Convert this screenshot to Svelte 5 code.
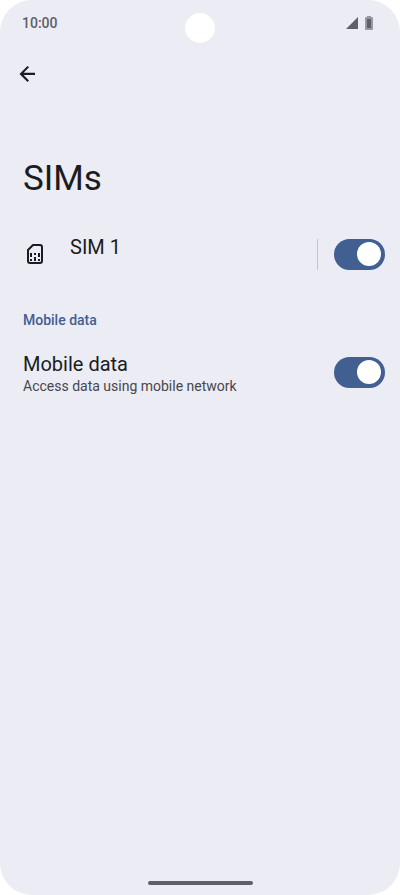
<script>
    let simEnabled = $state(true);
    let mobileData = $state(true);
</script>

<div class="screen">
    <header class="status-bar">
        <span class="time">10:00</span>
        <div class="camera"></div>
        <div class="status-icons">
            <svg width="12" height="12" viewBox="0 0 12 12" aria-hidden="true">
                <path d="M12 0v12H0z" />
            </svg>
            <svg width="8" height="14" viewBox="0 0 8 14" aria-hidden="true">
                <path d="M2 0h4v1h1a1 1 0 0 1 1 1v11a1 1 0 0 1-1 1H1a1 1 0 0 1-1-1V2a1 1 0 0 1 1-1h1z" opacity="0.6" />
                <path d="M2 3h4v9H2z" />
            </svg>
        </div>
    </header>

    <nav class="toolbar">
        <button class="back" aria-label="Back">
            <svg width="24" height="24" viewBox="0 0 24 24" aria-hidden="true">
                <path d="M19 10.700H7.600l5.400-5.400L11.500 3.900l-8 8 8 8 1.500-1.500-5.400-5.400H19z" />
            </svg>
        </button>
    </nav>

    <main>
        <h1>SIMs</h1>

        <div class="row">
            <svg class="sim-icon" width="24" height="24" viewBox="0 0 24 24" aria-hidden="true">
                <path d="M10 3h7a2 2 0 0 1 2 2v14a2 2 0 0 1-2 2H7a2 2 0 0 1-2-2V8z" fill="none" stroke="currentColor" stroke-width="2" stroke-linejoin="round" />
                <path d="M7 11h2v4H7zM11 11h2v2h-2zM15 11h2v4h-2zM7 17h2v2H7zM11 15h2v4h-2zM15 17h2v2h-2z" />
            </svg>
            <label class="title sim-name" for="sim-switch">SIM 1</label>
            <div class="divider"></div>
            <input id="sim-switch" class="switch" type="checkbox" role="switch" bind:checked={simEnabled} />
        </div>

        <h2>Mobile data</h2>

        <div class="row">
            <div class="text">
                <label class="title" for="data-switch">Mobile data</label>
                <p>Access data using mobile network</p>
            </div>
            <input id="data-switch" class="switch" type="checkbox" role="switch" bind:checked={mobileData} />
        </div>
    </main>

    <footer>
        <div class="home-handle"></div>
    </footer>
</div>

<style>
    :global(body) {
        margin: 0;
        background: white;
    }
    .screen {
        position: relative;
        display: flex;
        flex-direction: column;
        box-sizing: border-box;
        min-height: 100vh;
        border-radius: 32px;
        background: #ebecf4;
        color: #1b1c21;
        font-family: Roboto, "Liberation Sans", sans-serif;
    }
    svg {
        display: block;
        flex: none;
        fill: currentColor;
    }
    .status-bar {
        display: flex;
        align-items: center;
        justify-content: space-between;
        height: 46px;
        padding: 0 27px 0 22px;
        color: #5f6067;
    }
    .time {
        font-size: 14px;
        font-weight: 500;
    }
    .camera {
        position: absolute;
        top: 13px;
        left: 50%;
        width: 30px;
        height: 30px;
        margin-left: -15px;
        border-radius: 50%;
        background: white;
    }
    .status-icons {
        display: flex;
        align-items: center;
        gap: 7px;
    }
    .toolbar {
        padding: 8px 8px 0;
    }
    .back {
        display: flex;
        align-items: center;
        justify-content: center;
        width: 40px;
        height: 40px;
        padding: 0;
        border: 0;
        border-radius: 50%;
        background: none;
        color: inherit;
        cursor: pointer;
    }
    main {
        flex: 1;
        padding: 61px 15px 0 23px;
    }
    h1 {
        margin: 0;
        font-size: 35px;
        font-weight: 400;
        line-height: 48px;
    }
    .row {
        display: flex;
        align-items: center;
        min-height: 48px;
    }
    h1 + .row {
        margin-top: 27px;
    }
    .title {
        display: block;
        font-size: 20px;
        line-height: 24px;
    }
    .sim-icon {
        margin-right: 23px;
    }
    .sim-name {
        flex: 1;
        align-self: flex-start;
        padding-top: 5px;
    }
    .divider {
        width: 1px;
        height: 31px;
        margin-right: 16px;
        background: #c5c6cd;
    }
    h2 {
        margin: 32px 0 18px;
        font-size: 14px;
        font-weight: 500;
        line-height: 20px;
        color: #415f91;
    }
    .text {
        flex: 1;
        padding-top: 4px;
    }
    p {
        margin: 0;
        font-size: 14px;
        line-height: 20px;
        color: #46474e;
    }
    .switch {
        appearance: none;
        display: flex;
        flex: none;
        align-items: center;
        box-sizing: border-box;
        width: 51px;
        height: 31px;
        margin: 0;
        padding: 0 4px;
        border-radius: 16px;
        background: #c5c6cd;
        cursor: pointer;
    }
    .switch::before {
        content: "";
        width: 24px;
        height: 24px;
        border-radius: 50%;
        background: white;
    }
    .switch:checked {
        justify-content: flex-end;
        background: #415f91;
    }
    footer {
        display: flex;
        justify-content: center;
        padding-bottom: 10px;
    }
    .home-handle {
        width: 105px;
        height: 4px;
        border-radius: 2px;
        background: #5f6067;
    }
</style>
